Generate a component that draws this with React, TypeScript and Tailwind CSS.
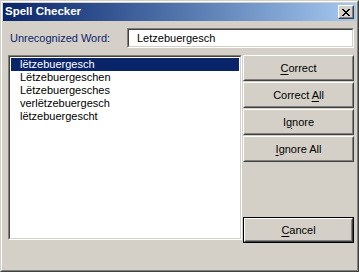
import React from 'react';

const suggestions = [
  'lëtzebuergesch',
  'Lëtzebuergeschen',
  'Lëtzebuergesches',
  'verlëtzebuergesch',
  'lëtzebuergescht',
];

// Marlett-style close glyph, 8x7 pixels
const closeRows = ['XX....XX', '.XX..XX.', '..XXXX..', '...XX...', '..XXXX..', '.XX..XX.', 'XX....XX'];

function CloseGlyph() {
  return (
    <svg width="8" height="7" viewBox="0 0 8 7" shapeRendering="crispEdges">
      {closeRows.map((row, y) =>
        row.split('').map((c, x) => (c === 'X' ? <rect key={`${x}-${y}`} x={x} y={y} width="1" height="1" fill="#000" /> : null))
      )}
    </svg>
  );
}

function Raised({ children, className = '' }: { children: React.ReactNode; className?: string }) {
  return (
    <div className={`border border-t-white border-l-white border-r-[#404040] border-b-[#404040] ${className}`}>
      <div className="h-full w-full border border-t-[#d4d0c8] border-l-[#d4d0c8] border-r-[#808080] border-b-[#808080] flex items-center justify-center">
        {children}
      </div>
    </div>
  );
}

function Sunken({ children, className = '' }: { children: React.ReactNode; className?: string }) {
  return (
    <div className={`border border-t-[#808080] border-l-[#808080] border-r-white border-b-white ${className}`}>
      <div className="h-full w-full border border-t-[#404040] border-l-[#404040] border-r-[#d4d0c8] border-b-[#d4d0c8] bg-white">
        {children}
      </div>
    </div>
  );
}

function Btn({ label, u }: { label: string; u: number }) {
  return (
    <Raised className="h-[26px] w-full">
      <span className="text-black">
        {label.slice(0, u)}
        <span className="underline underline-offset-[2px]">{label[u]}</span>
        {label.slice(u + 1)}
      </span>
    </Raised>
  );
}

export default function App() {
  return (
    <div
      className="w-[359px] h-[272px] border border-t-[#d4d0c8] border-l-[#d4d0c8] border-r-[#404040] border-b-[#404040] text-[11px] leading-none"
      style={{ fontFamily: '"Liberation Sans", Arial, sans-serif' }}
    >
      <div className="h-full w-full border border-t-white border-l-white border-r-[#808080] border-b-[#808080] bg-[#d4d0c8] p-px flex flex-col">
        {/* title bar */}
        <div className="h-[18px] flex items-center justify-between bg-linear-to-r from-[#0a246a] to-[#a6caf0]">
          <span className="pl-[2px] font-bold text-[11.5px] text-white">Spell Checker</span>
          <Raised className="h-[14px] w-[16px] mr-[2px] bg-[#d4d0c8]">
            <CloseGlyph />
          </Raised>
        </div>

        {/* body */}
        <div className="flex flex-col pt-[7px] pl-[5px]">
          <div className="flex items-center h-[20px]">
            <span className="pl-[2px] w-[119px] text-[#0a246a]">Unrecognized Word:</span>
            <Sunken className="h-[20px] w-[227px]">
              <div className="h-full flex items-center pl-[8px] text-black">Letzebuergesch</div>
            </Sunken>
          </div>

          <div className="flex items-start mt-[6px]">
            <Sunken className="mt-px h-[185px] w-[234px]">
              <div className="p-px flex flex-col">
                {suggestions.map((s, i) => (
                  <div
                    key={s}
                    className={`h-[13px] flex items-center pl-[9px] ${i === 0 ? 'bg-[#0a246a] text-white' : 'text-black'}`}
                  >
                    {s}
                  </div>
                ))}
              </div>
            </Sunken>

            <div className="ml-px mt-px w-[111px] h-[188px] flex flex-col">
              <div className="flex flex-col gap-px">
                <Btn label="Correct" u={0} />
                <Btn label="Correct All" u={8} />
                <Btn label="Ignore" u={1} />
                <Btn label="Ignore All" u={0} />
              </div>
              <div className="mt-auto border border-black">
                <Raised className="h-[24px] w-full">
                  <span className="text-black">
                    <span className="underline underline-offset-[2px]">C</span>ancel
                  </span>
                </Raised>
              </div>
            </div>
          </div>
        </div>
      </div>
    </div>
  );
}
